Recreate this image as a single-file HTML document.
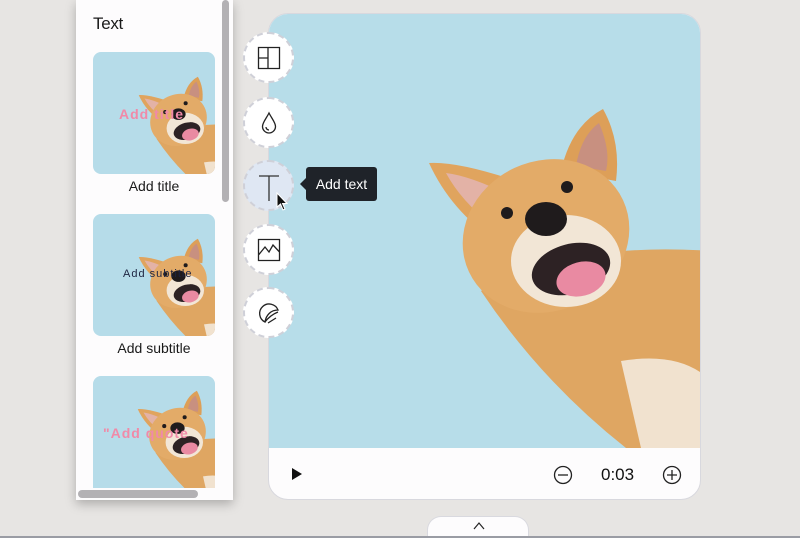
<!DOCTYPE html>
<html style="width:800px;height:538px;overflow:hidden"><head><meta charset="utf-8">
<style>
*{margin:0;padding:0;box-sizing:border-box}
body{width:800px;height:538px;overflow:hidden;background:#e7e5e3;font-family:"Liberation Sans",sans-serif;position:relative}
.panel{position:absolute;left:76px;top:0;width:157px;height:500px;background:#fdfcfd;box-shadow:0 4px 10px rgba(0,0,0,.25)}
.panel h1{position:absolute;left:17px;top:14px;font-size:17px;font-weight:normal;color:#1a1a1a;letter-spacing:-.3px}
.vs{position:absolute;left:146px;top:0;width:7px;height:202px;background:#b3b1b4;border-radius:4px}
.hs{position:absolute;left:2px;top:490px;width:120px;height:8px;background:#b3b1b4;border-radius:4px}
.th{position:absolute;left:17px;width:122px;height:122px;border-radius:8px;background:#b6dce9;overflow:hidden}
.lab{position:absolute;left:17px;width:122px;text-align:center;font-size:14px;color:#1a1a1a}
.ttxt{position:absolute;font-weight:bold;letter-spacing:1px}
.canvas{position:absolute;left:268px;top:13px;width:433px;height:487px;border-radius:20px;background:#fdfcfd;overflow:hidden;border:1px solid #d8d8de}
.img{position:absolute;left:0;top:0;width:433px;height:434px;background:#b7dde9;overflow:hidden}
.circ{position:absolute;left:243px;width:51px;height:51px;border-radius:50%;background:#fff;border:2px dashed #cfd0d8}
.circ svg{position:absolute;left:12px;top:12px}
.tip{position:absolute;left:306px;top:167px;width:71px;height:34px;background:#1f2329;border-radius:3px;color:#fff;font-size:14px;line-height:34px;text-align:center}
.tip:before{content:"";position:absolute;left:-6px;top:11px;border:6px solid transparent;border-left:0;border-right-color:#1f2329}
.tab{position:absolute;left:427px;top:516px;width:102px;height:20px;background:#fdfcfd;border-radius:14px 14px 0 0;border:1px solid #d9d9df;border-bottom:0}
.line{position:absolute;left:0;top:536px;width:800px;height:2px;background:#9a9ca4}
</style></head><body>
<svg width="0" height="0" style="position:absolute">
<defs>
<g id="dog">
<path d="M60 190 Q150 140 290 150 L290 347 L205 347 Q120 280 60 190Z" fill="#dfa662"/>
<path d="M200 260 Q260 250 290 280 L290 347 L220 347Z" fill="#f1e2cf"/>
<path d="M8 62 Q40 60 110 85 L75 140 Q30 110 8 62Z" fill="#e0a45e"/>
<path d="M25 72 Q50 75 90 95 L72 125 Q40 100 25 72Z" fill="#e3b2a6"/>
<path d="M182 8 Q200 40 195 80 L140 70 Q150 25 182 8Z" fill="#dd9f58"/>
<path d="M178 22 Q190 50 185 70 L155 65 Q160 35 178 22Z" fill="#c89080"/>
<ellipse cx="125" cy="135" rx="85" ry="75" transform="rotate(-25 125 135)" fill="#e3ab68"/>
<ellipse cx="145" cy="160" rx="55" ry="46" fill="#f2e6d6"/>
<ellipse cx="150" cy="168" rx="40" ry="25" transform="rotate(-15 150 168)" fill="#2d2224"/>
<ellipse cx="160" cy="178" rx="25" ry="17" transform="rotate(-15 160 178)" fill="#e98aa2"/>
<ellipse cx="125" cy="118" rx="21" ry="17" fill="#1f1b1c"/>
<circle cx="86" cy="112" r="6" fill="#1f1b1c"/>
<circle cx="146" cy="86" r="6" fill="#1f1b1c"/>
</g>
</defs></svg>

<div class="panel">
<h1>Text</h1>
<div class="th" style="top:52px"><svg width="122" height="122"><use href="#dog" transform="translate(43 22) scale(.34)"/></svg><div class="ttxt" style="left:26px;top:54px;font-size:14px;color:#f08aa8">Add title</div></div>
<div class="lab" style="top:178px">Add title</div>
<div class="th" style="top:214px"><svg width="122" height="122"><use href="#dog" transform="translate(43 22) scale(.34)"/></svg><div class="ttxt" style="left:30px;top:54px;font-size:11px;font-weight:normal;color:#1d2340">Add subtitle</div></div>
<div class="lab" style="top:340px">Add subtitle</div>
<div class="th" style="top:376px;height:112px;border-radius:8px 8px 0 0"><svg width="122" height="122"><use href="#dog" transform="translate(42 12) scale(.34)"/></svg><div class="ttxt" style="left:10px;top:49px;font-size:14px;color:#f08aa8">"Add quote</div></div>
<div class="vs"></div>
<div class="hs"></div>
</div>

<div class="canvas">
<div class="img"><svg width="433" height="434"><use href="#dog" transform="translate(152 87)"/></svg></div>
<svg style="position:absolute;left:22px;top:453px" width="12" height="14"><path d="M1 1L11 7L1 13Z" fill="#111"/></svg>
<svg style="position:absolute;left:284px;top:451px" width="20" height="20"><circle cx="10" cy="10" r="8.5" fill="none" stroke="#222" stroke-width="1.3"/><path d="M5 10H15" stroke="#222" stroke-width="1.3"/></svg>
<div style="position:absolute;left:332px;top:451px;font-size:17px;color:#111">0:03</div>
<svg style="position:absolute;left:393px;top:451px" width="20" height="20"><circle cx="10" cy="10" r="8.5" fill="none" stroke="#222" stroke-width="1.3"/><path d="M5 10H15M10 5V15" stroke="#222" stroke-width="1.3"/></svg>
</div>

<div class="circ" style="top:32px"><svg width="24" height="24"><path d="M1.5 1.5H22.5V22.5H1.5Z M11 1.5V22.5 M1.5 12H11" fill="none" stroke="#222" stroke-width="1.3"/></svg></div>
<div class="circ" style="top:97px"><svg width="24" height="24"><path d="M12 2C9 8 5.5 11.5 5.5 15.5A6.5 6.5 0 0 0 18.5 15.5C18.5 11.5 15 8 12 2Z M9 16A3 3 0 0 0 12 19" fill="none" stroke="#222" stroke-width="1.3"/></svg></div>
<div class="circ" style="top:160px;background:#dfe7f3"><svg width="24" height="28"><path d="M2 2H22M12 2V27" fill="none" stroke="#333" stroke-width="1.3"/></svg></div>
<svg style="position:absolute;left:276px;top:192px" width="14" height="20"><path d="M1 1L1 15L4.5 12L7 18L9 17L6.5 11.5L11 11.5Z" fill="#111" stroke="#fff" stroke-width="1"/></svg>
<div class="circ" style="top:224px"><svg width="24" height="24"><path d="M1.5 1.5H22.5V22.5H1.5Z M1.5 17L8 9L12 14L16 7L22.5 14" fill="none" stroke="#222" stroke-width="1.3"/></svg></div>
<div class="circ" style="top:287px"><svg width="24" height="24"><path d="M8 21A9.5 9.5 0 1 1 21 9C14 9 9 14 8 21Z M8 21C11 17 16 13 21 11M11 22L19 17" fill="none" stroke="#222" stroke-width="1.3"/></svg></div>
<div class="tip">Add text</div>

<div class="tab"><svg style="position:absolute;left:45px;top:5px" width="12" height="8"><path d="M1 7L6 1L11 7" fill="none" stroke="#222" stroke-width="1.2"/></svg></div>
<div class="line"></div>
</body></html>
